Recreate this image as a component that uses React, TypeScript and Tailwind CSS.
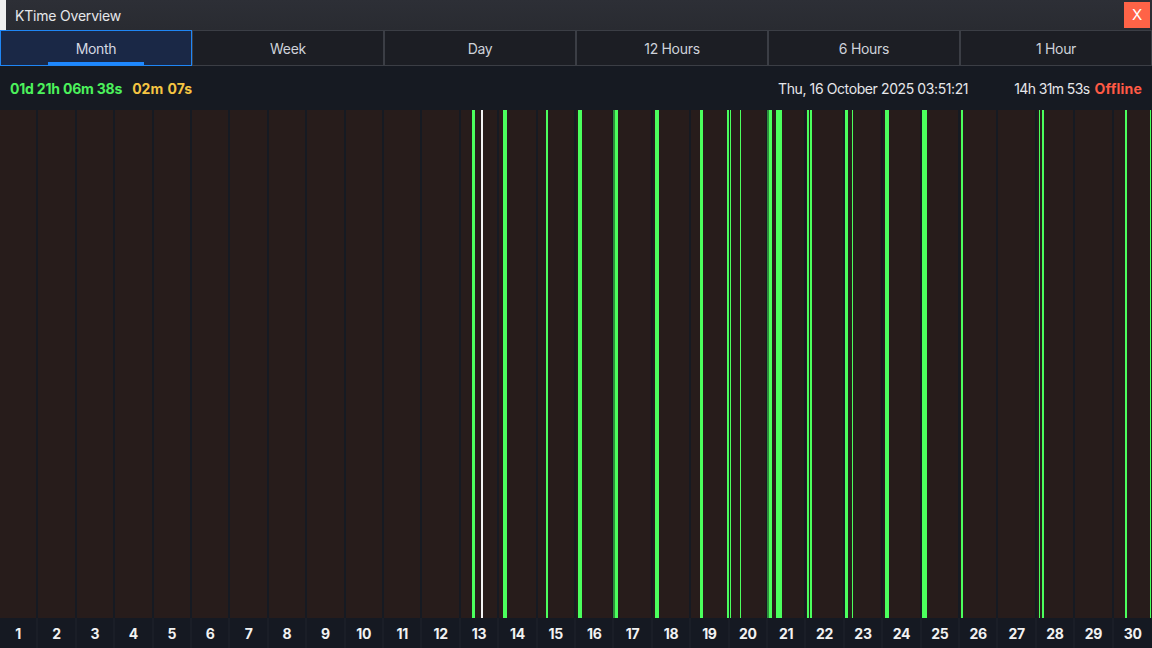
import React from "react";

const tabs = ["Month", "Week", "Day", "12 Hours", "6 Hours", "1 Hour"];

type Bar = { x: number; w: number; c: string };
const G = "#4bff5d";
const D = "#2f8f3c";
const bars: Bar[] = [
  { x: 472, w: 3, c: G },
  { x: 481, w: 2, c: "#f4f4f4" },
  { x: 503, w: 4, c: G },
  { x: 546, w: 2, c: G },
  { x: 578, w: 4, c: G },
  { x: 613, w: 2, c: D },
  { x: 615, w: 3, c: G },
  { x: 655, w: 4, c: G },
  { x: 700, w: 3, c: G },
  { x: 727, w: 1.5, c: G },
  { x: 730, w: 1, c: G },
  { x: 740, w: 1, c: G },
  { x: 767, w: 2, c: D },
  { x: 769, w: 3, c: G },
  { x: 776, w: 6, c: G },
  { x: 807, w: 2, c: G },
  { x: 810, w: 2, c: G },
  { x: 845, w: 3, c: G },
  { x: 852, w: 1, c: G },
  { x: 885, w: 4, c: G },
  { x: 922, w: 5, c: G },
  { x: 961, w: 1.5, c: G },
  { x: 1039, w: 1, c: G },
  { x: 1042, w: 2, c: G },
  { x: 1125, w: 2, c: G },
  { x: 1150, w: 1, c: G },
];

const days = Array.from({ length: 30 }, (_, i) => i + 1);

export default function App() {
  return (
    <div
      className="w-[1152px] h-[648px] flex flex-col overflow-hidden bg-[#161a22]"
      style={{ fontFamily: "Inter, 'Noto Sans', sans-serif" }}
    >
      {/* Title bar */}
      <div className="h-[30px] flex items-center bg-gradient-to-b from-[#2d2f36] to-[#292b31]">
        <div className="w-[6px] h-full bg-[#efefef]" />
        <div className="ml-[9px] text-[14px] text-[#e6e7ea] tracking-[-0.2px]">KTime Overview</div>
        <div className="ml-auto mr-[2px] w-[26px] h-[26px] bg-[#ff6347] flex items-center justify-center text-white text-[15px]">
          X
        </div>
      </div>

      {/* Tabs */}
      <div className="h-[36px] grid grid-cols-6 bg-[#1c1e24]">
        {tabs.map((t, i) =>
          i === 0 ? (
            <div
              key={t}
              className="relative flex items-center justify-center border border-[#1f86f5] bg-[#1a2846] text-[14px] text-[#d5d9e2] tracking-[-0.3px]"
            >
              {t}
              <div className="absolute left-[47px] bottom-0 w-[96px] h-[3px] bg-[#1e88ff]" />
            </div>
          ) : (
            <div
              key={t}
              className="flex items-center justify-center border border-[#3b3e45] bg-[#1c1e24] text-[14px] text-[#ced2da] tracking-[-0.3px]"
            >
              {t}
            </div>
          )
        )}
      </div>

      {/* Stats row */}
      <div className="h-[44px] flex items-center pl-[10px] pr-[10px] text-[14px]">
        <span className="font-bold text-[#4cf25c] tracking-[-0.2px]">01d 21h 06m 38s</span>
        <span className="ml-[10px] font-bold text-[#f5c542] [word-spacing:1px]">02m 07s</span>
        <span className="ml-auto text-[#e6e7ea] tracking-[-0.4px]">Thu, 16 October 2025 03:51:21</span>
        <span className="ml-[46px] text-[#e6e7ea] tracking-[-0.6px]">14h 31m 53s</span>
        <span className="ml-[5px] font-bold text-[#ff5a45] tracking-[0.2px]">Offline</span>
      </div>

      {/* Chart */}
      <div className="relative flex-1 grid grid-cols-30">
        {days.map((d) => (
          <div
            key={d}
            className={d === 30 ? "bg-[#271c1b]" : "bg-[#271c1b] border-r-2 border-[#161a22]"}
          />
        ))}
        <div className="absolute inset-0 pointer-events-none">
          {bars.map((b, i) => (
            <div
              key={i}
              className="absolute top-0 bottom-0"
              style={{ left: b.x, width: b.w, backgroundColor: b.c }}
            />
          ))}
        </div>
      </div>

      {/* Labels */}
      <div className="h-[30px] grid grid-cols-30 bg-[#151922]">
        {days.map((d) => (
          <div
            key={d}
            className={
              "flex items-center justify-center text-[14px] font-bold text-[#f2f2f2] tracking-[-0.3px] " +
              (d === 30 ? "" : "border-r-2 border-[#1a1e27]")
            }
          >
            {d}
          </div>
        ))}
      </div>
    </div>
  );
}
